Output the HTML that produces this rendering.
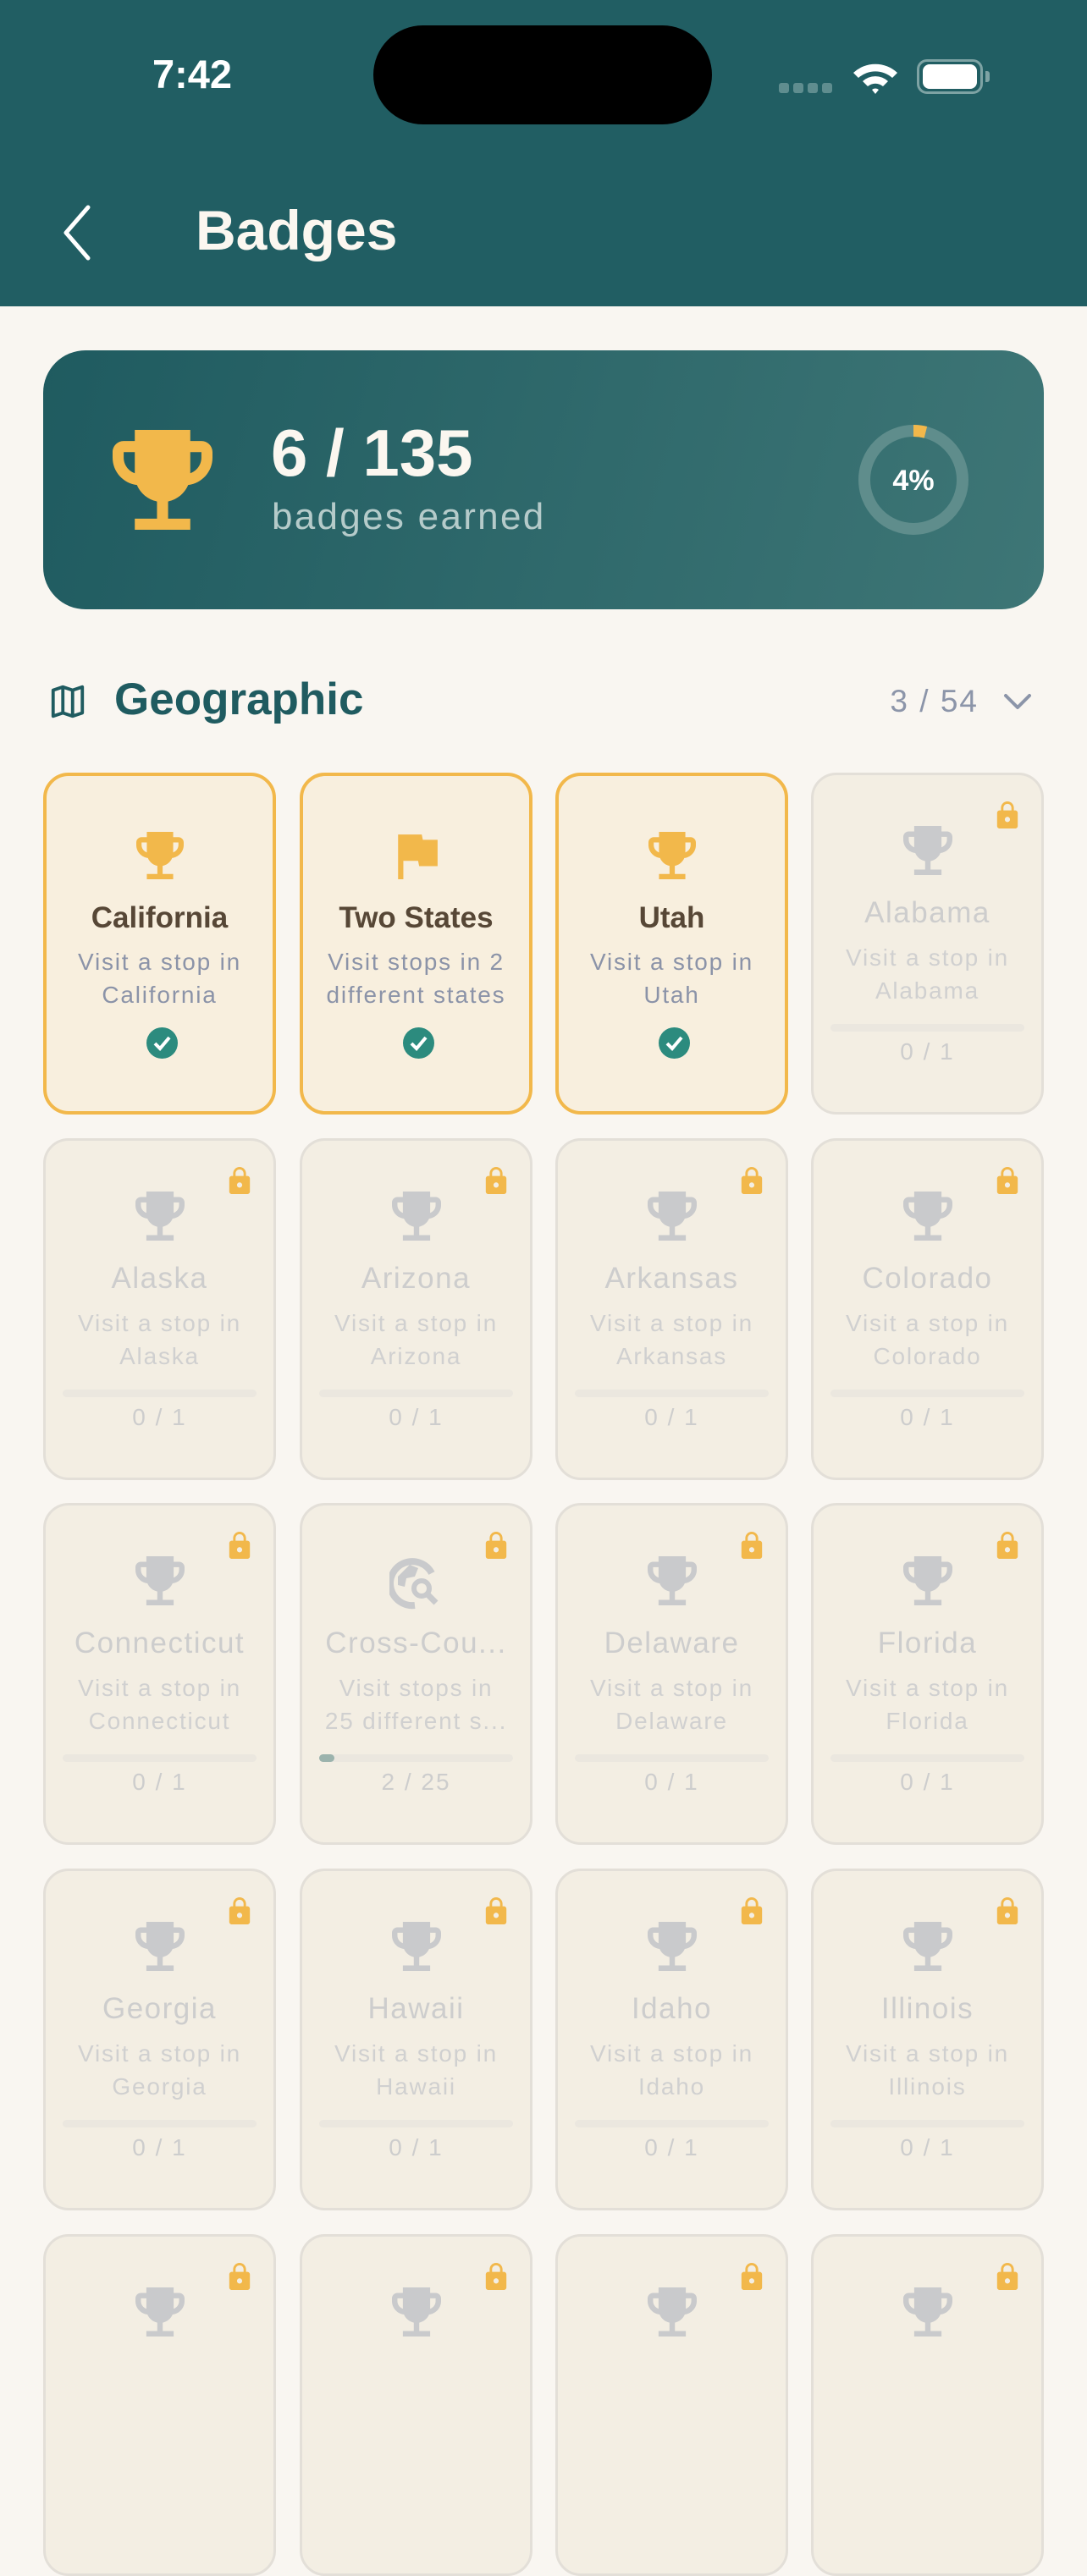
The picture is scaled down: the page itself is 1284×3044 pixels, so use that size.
<!DOCTYPE html>
<html><head><meta charset="utf-8"><style>
*{margin:0;padding:0;box-sizing:border-box}
body{width:1284px;height:2778px;overflow:hidden;background:#f9f6f1;font-family:"Liberation Sans",sans-serif;position:relative}
.hdr{position:absolute;left:0;top:0;width:1284px;height:362px;background:#215e63}
.abs{position:absolute}
.card{position:absolute;width:275px;height:404px;border-radius:30px}
.e{background:#f8efde;border:4px solid #f2b84b}
.l{background:#f3eee3;border:3px solid #e3dfd8}
.card .ic{position:absolute;left:0;right:0;text-align:center}
.card .t{position:absolute;left:4px;right:4px;text-align:center;font-size:35px;line-height:40px;white-space:nowrap;overflow:hidden}
.card .d{position:absolute;left:0;right:0;text-align:center;font-size:28px;line-height:39px;letter-spacing:1.8px;white-space:nowrap}
.e .t{top:148px;color:#574736;font-weight:bold;font-size:35px}
.e .d{top:200px;color:#8b93a8}
.e .ic{top:66px}
.l .t{top:143px;color:#cdcdcd;letter-spacing:1.5px}
.l .d{top:196px;color:#d0d0d0}
.l .ic{top:60px}
.l .bar{position:absolute;left:20px;right:20px;top:294px;height:9px;border-radius:5px;background:#ebe7df}
.l .n{position:absolute;left:0;right:0;top:311px;text-align:center;font-size:28px;color:#cdcdcd;letter-spacing:2px}
.l .lk{position:absolute;right:27px;top:31px}
.chk{position:absolute;left:118px;top:297px;width:37px;height:37px;border-radius:50%;background:#2c8b7e}
</style></head><body>
<div class="hdr"></div>
<div class="abs" style="left:180px;top:60px;font-size:47px;color:#fff;font-weight:bold">7:42</div>
<div class="abs" style="left:441px;top:30px;width:400px;height:117px;border-radius:59px;background:#000"></div>
<div class="abs" style="left:920px;top:98px;width:12px;height:12px;border-radius:3px;background:#5f8d8f"></div>
<div class="abs" style="left:937px;top:98px;width:12px;height:12px;border-radius:3px;background:#5f8d8f"></div>
<div class="abs" style="left:954px;top:98px;width:12px;height:12px;border-radius:3px;background:#5f8d8f"></div>
<div class="abs" style="left:971px;top:98px;width:12px;height:12px;border-radius:3px;background:#5f8d8f"></div>
<svg class="abs" style="left:1005px;top:68px" width="58" height="44" viewBox="0 0 58 44"><path d="M3 18A38 38 0 0 1 55 18L49 24A30 30 0 0 0 9 24Z M14 28A22 22 0 0 1 44 28L38 34A14 14 0 0 0 20 34Z M25 38A6 6 0 0 1 33 38L29 43Z" fill="#fff"/></svg>
<div class="abs" style="left:1083px;top:70px;width:78px;height:41px;border-radius:12px;border:3px solid #7ea3a4"></div>
<div class="abs" style="left:1090px;top:76px;width:64px;height:29px;border-radius:8px;background:#fff"></div>
<div class="abs" style="left:1164px;top:84px;width:5px;height:13px;border-radius:0 3px 3px 0;background:#7ea3a4"></div>
<svg class="abs" style="left:70px;top:242px" width="40" height="66" viewBox="0 0 40 66"><path d="M34 3L8 33L34 63" stroke="#fff" stroke-width="5" fill="none" stroke-linecap="round" stroke-linejoin="round"/></svg>
<div class="abs" style="left:231px;top:234px;font-size:66px;color:#fbf7f0;font-weight:bold">Badges</div>

<div class="abs" style="left:51px;top:414px;width:1182px;height:306px;border-radius:50px;background:linear-gradient(105deg,#1f5b60,#3e7676)"></div>
<svg class="abs" style="left:133px;top:508px" width="118" height="118" viewBox="3 3 18 18"><path d="M19 5h-2V3H7v2H5c-1.1 0-2 .9-2 2v1c0 2.550 1.92 4.63 4.39 4.94.63 1.5 1.98 2.63 3.61 2.96V19H7v2h10v-2h-4v-3.1c1.63-.33 2.98-1.46 3.61-2.96C19.08 12.63 21 10.55 21 8V7c0-1.1-.9-2-2-2zM5 8V7h2v3.82C5.84 10.4 5 9.3 5 8zm14 0c0 1.3-.84 2.4-2 2.82V7h2v1z" fill="#f2b84b"/></svg>
<div class="abs" style="left:320px;top:490px;font-size:78px;color:#fbf7f0;font-weight:bold;line-height:90px">6 / 135</div>
<div class="abs" style="left:321px;top:586px;font-size:44px;color:#b5cbca;letter-spacing:2.3px">badges earned</div>
<svg class="abs" style="left:1012px;top:500px" width="134" height="134" viewBox="0 0 134 134"><circle cx="67" cy="67" r="58" fill="none" stroke="#5f8d8c" stroke-width="14"/><path d="M67 9A58 58 0 0 1 81.4 10.8" fill="none" stroke="#f2b84b" stroke-width="14"/><text x="67" y="79" text-anchor="middle" font-family="Liberation Sans" font-weight="bold" font-size="34" fill="#fff">4%</text></svg>

<svg class="abs" style="left:57px;top:806px" width="46" height="46" viewBox="0 0 24 24"><path d="M3 5L9 3L15 5L21 3V19L15 21L9 19L3 21Z M9 3V19 M15 5V21" fill="none" stroke="#1f5b60" stroke-width="2" stroke-linejoin="round"/></svg>
<div class="abs" style="left:135px;top:796px;font-size:53px;color:#1f5b60;font-weight:bold">Geographic</div>
<div class="abs" style="left:1040px;top:808px;width:116px;text-align:right;font-size:37px;color:#8c95a9;letter-spacing:2px">3 / 54</div>
<svg class="abs" style="left:1184px;top:816px" width="36" height="26" viewBox="0 0 36 26"><path d="M4 6L18 20L32 6" fill="none" stroke="#8c95a9" stroke-width="4" stroke-linecap="round" stroke-linejoin="round"/></svg>

<svg width="0" height="0" style="position:absolute"><defs>
<symbol id="tr" viewBox="3 3 18 18"><path d="M19 5h-2V3H7v2H5c-1.1 0-2 .9-2 2v1c0 2.55 1.92 4.63 4.39 4.94.63 1.5 1.98 2.63 3.61 2.96V19H7v2h10v-2h-4v-3.1c1.63-.33 2.98-1.46 3.61-2.96C19.08 12.630 21 10.55 21 8V7c0-1.1-.9-2-2-2zM5 8V7h2v3.82C5.84 10.4 5 9.3 5 8zm14 0c0 1.3-.84 2.4-2 2.82V7h2v1z"/></symbol>
<symbol id="lk" viewBox="4 1 16 21"><path d="M18 8h-1V6c0-2.76-2.24-5-5-5S7 3.24 7 6v2H6c-1.1 0-2 .9-2 2v10c0 1.1.9 2 2 2h12c1.1 0 2-.9 2-2V10c0-1.1-.9-2-2-2zm-6 9c-1.1 0-2-.9-2-2s.9-2 2-2 2 .9 2 2-.9 2-2 2zm3.1-9H8.9V6c0-1.71 1.39-3.1 3.1-3.1 1.71 0 3.1 1.39 3.1 3.1v2z"/></symbol>
</defs></svg>

<!-- row 1 -->
<div class="card e" style="left:51px;top:913px"><div class="ic"><svg width="56" height="56" fill="#f2b84b"><use href="#tr"/></svg></div><div class="t">California</div><div class="d">Visit a stop in<br>California</div><div class="chk"><svg width="37" height="37" viewBox="0 0 37 37"><path d="M10 19L16 25L27 12" fill="none" stroke="#fff" stroke-width="4"/></svg></div></div>
<div class="card e" style="left:354px;top:913px"><div class="ic"><svg width="56" height="56" viewBox="4 3 16 18" fill="#f2b84b"><path d="M14.4 6L14 4H5v17h2v-7h5.6l.4 2h7V6z"/></svg></div><div class="t">Two States</div><div class="d">Visit stops in 2<br>different states</div><div class="chk"><svg width="37" height="37" viewBox="0 0 37 37"><path d="M10 19L16 25L27 12" fill="none" stroke="#fff" stroke-width="4"/></svg></div></div>
<div class="card e" style="left:656px;top:913px"><div class="ic"><svg width="56" height="56" fill="#f2b84b"><use href="#tr"/></svg></div><div class="t">Utah</div><div class="d">Visit a stop in<br>Utah</div><div class="chk"><svg width="37" height="37" viewBox="0 0 37 37"><path d="M10 19L16 25L27 12" fill="none" stroke="#fff" stroke-width="4"/></svg></div></div>
<div class="card l" style="left:958px;top:913px"><svg class="lk" width="26" height="32" fill="#f2b84b"><use href="#lk"/></svg><div class="ic"><svg width="58" height="58" fill="#c9cacc"><use href="#tr"/></svg></div><div class="t">Alabama</div><div class="d">Visit a stop in<br>Alabama</div><div class="bar"></div><div class="n">0 / 1</div></div>

<!-- row 2 -->
<div class="card l" style="left:51px;top:1345px"><svg class="lk" width="26" height="32" fill="#f2b84b"><use href="#lk"/></svg><div class="ic"><svg width="58" height="58" fill="#c9cacc"><use href="#tr"/></svg></div><div class="t">Alaska</div><div class="d">Visit a stop in<br>Alaska</div><div class="bar"></div><div class="n">0 / 1</div></div>
<div class="card l" style="left:354px;top:1345px"><svg class="lk" width="26" height="32" fill="#f2b84b"><use href="#lk"/></svg><div class="ic"><svg width="58" height="58" fill="#c9cacc"><use href="#tr"/></svg></div><div class="t">Arizona</div><div class="d">Visit a stop in<br>Arizona</div><div class="bar"></div><div class="n">0 / 1</div></div>
<div class="card l" style="left:656px;top:1345px"><svg class="lk" width="26" height="32" fill="#f2b84b"><use href="#lk"/></svg><div class="ic"><svg width="58" height="58" fill="#c9cacc"><use href="#tr"/></svg></div><div class="t">Arkansas</div><div class="d">Visit a stop in<br>Arkansas</div><div class="bar"></div><div class="n">0 / 1</div></div>
<div class="card l" style="left:958px;top:1345px"><svg class="lk" width="26" height="32" fill="#f2b84b"><use href="#lk"/></svg><div class="ic"><svg width="58" height="58" fill="#c9cacc"><use href="#tr"/></svg></div><div class="t">Colorado</div><div class="d">Visit a stop in<br>Colorado</div><div class="bar"></div><div class="n">0 / 1</div></div>

<!-- row 3 -->
<div class="card l" style="left:51px;top:1776px"><svg class="lk" width="26" height="32" fill="#f2b84b"><use href="#lk"/></svg><div class="ic"><svg width="58" height="58" fill="#c9cacc"><use href="#tr"/></svg></div><div class="t">Connecticut</div><div class="d">Visit a stop in<br>Connecticut</div><div class="bar"></div><div class="n">0 / 1</div></div>
<div class="card l" style="left:354px;top:1776px"><svg class="lk" width="26" height="32" fill="#f2b84b"><use href="#lk"/></svg><div class="ic"><svg width="64" height="64" viewBox="0 0 64 64"><path d="M50 20A26 26 0 1 0 30 58" fill="none" stroke="#c9cacc" stroke-width="8"/><path d="M10 24L24 10L34 14L30 24L20 26L18 36L10 34Z" fill="#c9cacc"/><circle cx="38" cy="38" r="9" fill="none" stroke="#c9cacc" stroke-width="6"/><path d="M45 45L55 55" stroke="#c9cacc" stroke-width="7"/></svg></div><div class="t">Cross-Cou...</div><div class="d">Visit stops in<br>25 different s...</div><div class="bar"><div style="width:18px;height:9px;border-radius:5px;background:#9bb3ad"></div></div><div class="n">2 / 25</div></div>
<div class="card l" style="left:656px;top:1776px"><svg class="lk" width="26" height="32" fill="#f2b84b"><use href="#lk"/></svg><div class="ic"><svg width="58" height="58" fill="#c9cacc"><use href="#tr"/></svg></div><div class="t">Delaware</div><div class="d">Visit a stop in<br>Delaware</div><div class="bar"></div><div class="n">0 / 1</div></div>
<div class="card l" style="left:958px;top:1776px"><svg class="lk" width="26" height="32" fill="#f2b84b"><use href="#lk"/></svg><div class="ic"><svg width="58" height="58" fill="#c9cacc"><use href="#tr"/></svg></div><div class="t">Florida</div><div class="d">Visit a stop in<br>Florida</div><div class="bar"></div><div class="n">0 / 1</div></div>

<!-- row 4 -->
<div class="card l" style="left:51px;top:2208px"><svg class="lk" width="26" height="32" fill="#f2b84b"><use href="#lk"/></svg><div class="ic"><svg width="58" height="58" fill="#c9cacc"><use href="#tr"/></svg></div><div class="t">Georgia</div><div class="d">Visit a stop in<br>Georgia</div><div class="bar"></div><div class="n">0 / 1</div></div>
<div class="card l" style="left:354px;top:2208px"><svg class="lk" width="26" height="32" fill="#f2b84b"><use href="#lk"/></svg><div class="ic"><svg width="58" height="58" fill="#c9cacc"><use href="#tr"/></svg></div><div class="t">Hawaii</div><div class="d">Visit a stop in<br>Hawaii</div><div class="bar"></div><div class="n">0 / 1</div></div>
<div class="card l" style="left:656px;top:2208px"><svg class="lk" width="26" height="32" fill="#f2b84b"><use href="#lk"/></svg><div class="ic"><svg width="58" height="58" fill="#c9cacc"><use href="#tr"/></svg></div><div class="t">Idaho</div><div class="d">Visit a stop in<br>Idaho</div><div class="bar"></div><div class="n">0 / 1</div></div>
<div class="card l" style="left:958px;top:2208px"><svg class="lk" width="26" height="32" fill="#f2b84b"><use href="#lk"/></svg><div class="ic"><svg width="58" height="58" fill="#c9cacc"><use href="#tr"/></svg></div><div class="t">Illinois</div><div class="d">Visit a stop in<br>Illinois</div><div class="bar"></div><div class="n">0 / 1</div></div>

<!-- row 5 -->
<div class="card l" style="left:51px;top:2640px"><svg class="lk" width="26" height="32" fill="#f2b84b"><use href="#lk"/></svg><div class="ic"><svg width="58" height="58" fill="#c9cacc"><use href="#tr"/></svg></div></div>
<div class="card l" style="left:354px;top:2640px"><svg class="lk" width="26" height="32" fill="#f2b84b"><use href="#lk"/></svg><div class="ic"><svg width="58" height="58" fill="#c9cacc"><use href="#tr"/></svg></div></div>
<div class="card l" style="left:656px;top:2640px"><svg class="lk" width="26" height="32" fill="#f2b84b"><use href="#lk"/></svg><div class="ic"><svg width="58" height="58" fill="#c9cacc"><use href="#tr"/></svg></div></div>
<div class="card l" style="left:958px;top:2640px"><svg class="lk" width="26" height="32" fill="#f2b84b"><use href="#lk"/></svg><div class="ic"><svg width="58" height="58" fill="#c9cacc"><use href="#tr"/></svg></div></div>
</body></html>
